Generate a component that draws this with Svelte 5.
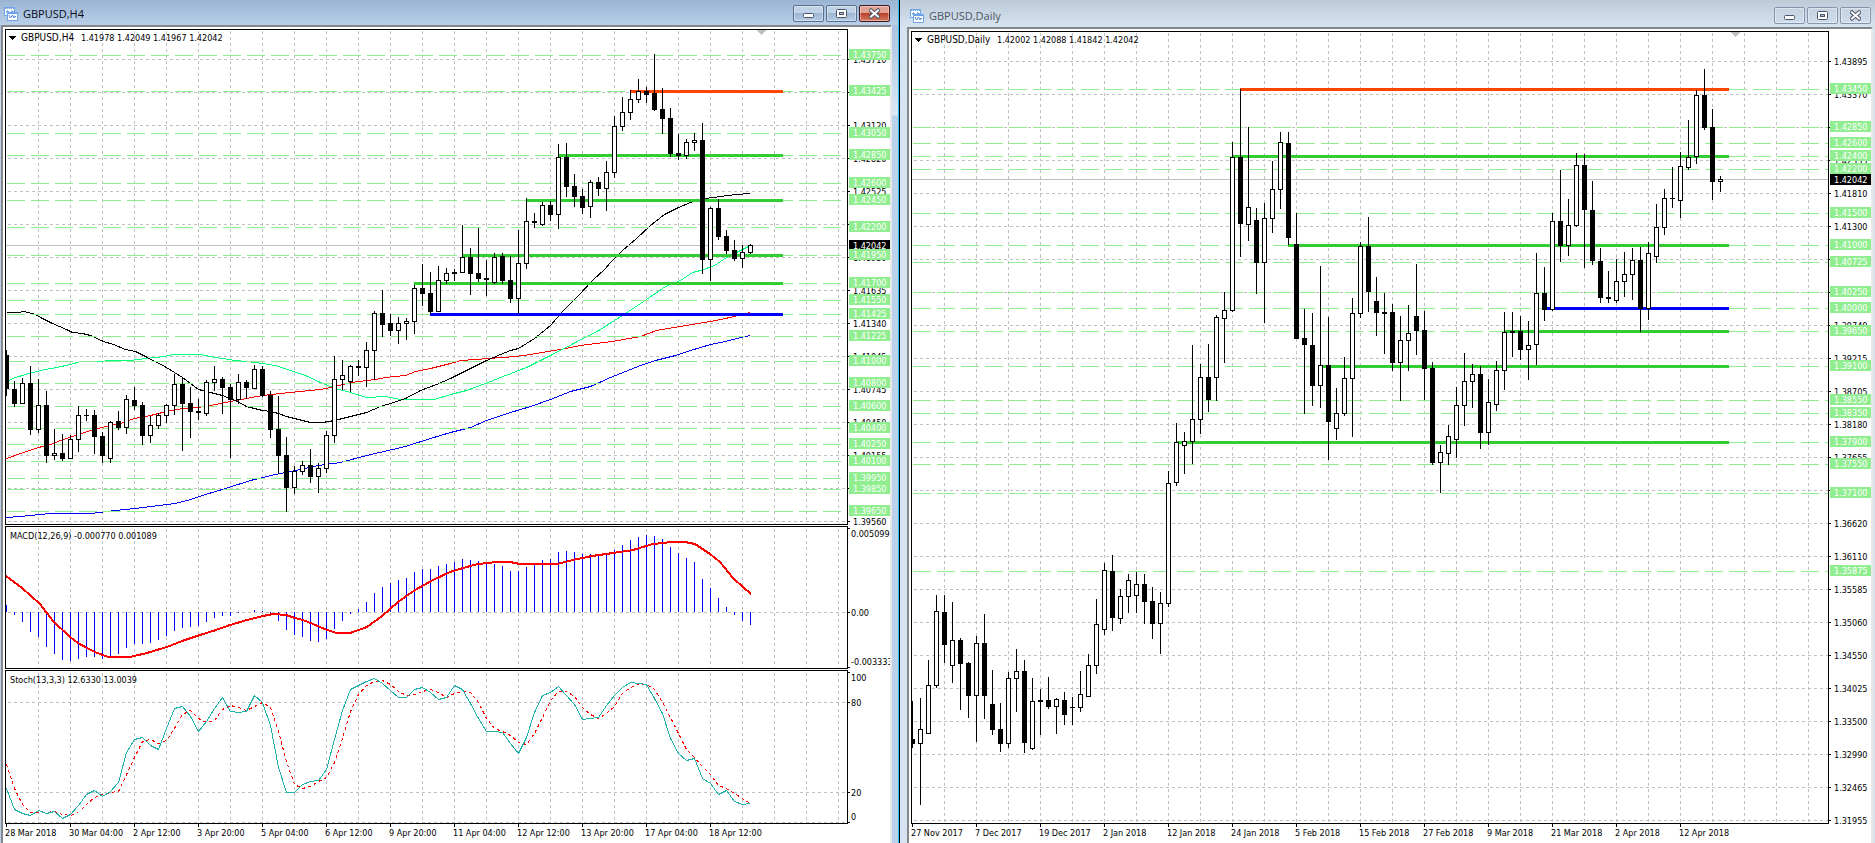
<script lang="ts">
  /**
   * Trading workspace
   *
   * Two tiled chart windows: GBPUSD H4 with MACD and Stochastic, and GBPUSD Daily
   */

  type Candle = number[]; // high, body top, body bottom, low, rising
  type Point = [number, number];
  type Level = [number, string];

  interface Trend {
    x: number;
    y: number;
    color: string;
  }

  interface Chart {
    title: string;
    quotes: string;
    quotesX: number;
    active: boolean;
    left: number;
    top: number;
    width: number;
    height: number;
    right: number; // x of the price axis
    bottom: number; // y of the lower edge of the price plot
    gridX: number;
    grid: { y: number; labels: string[] };
    levels: Level[];
    current: number;
    trends: Trend[];
    trendEnd: number;
    marker: number;
    candles: Candle[];
    dates: string[];
  }

  const STEP = 8;
  const GRID = 32;
  const ROW = 33;
  const BASE = 823;

  const GREEN = '#32cd32';
  const ORANGE = '#ff4500';
  const BLUE = '#0000ff';

  const h4: Chart = {
    title: 'GBPUSD,H4',
    quotes: '1.41978 1.42049 1.41967 1.42042',
    quotesX: 81,
    active: true,
    left: 5,
    top: 29,
    width: 885,
    height: 814,
    right: 847,
    bottom: 524,
    gridX: 38,
    grid: {
      y: 59,
      labels: [
        '1.43710', '1.43415', '1.43120', '1.42820', '1.42525', '1.42230', '1.41930', '1.41635',
        '1.41340', '1.41045', '1.40745', '1.40450', '1.40155', '1.39855', '1.39560',
      ],
    },
    levels: [
      [55, '1.43750'], [91, '1.43425'], [133, '1.43050'], [155, '1.42850'], [183, '1.42600'],
      [200, '1.42450'], [227, '1.42200'], [255, '1.41950'], [283, '1.41700'], [300, '1.41550'],
      [314, '1.41425'], [336, '1.41225'], [361, '1.41000'], [383, '1.40800'], [406, '1.40600'],
      [428, '1.40400'], [444, '1.40250'], [461, '1.40100'], [478, '1.39950'], [489, '1.39850'],
      [511, '1.39650'],
    ],
    current: 245,
    trends: [
      { x: 630, y: 91, color: ORANGE },
      { x: 558, y: 155, color: GREEN },
      { x: 526, y: 200, color: GREEN },
      { x: 462, y: 255, color: GREEN },
      { x: 414, y: 283, color: GREEN },
      { x: 430, y: 314, color: BLUE },
    ],
    trendEnd: 783,
    marker: 761,
    candles: [
      [350, 355, 389, 396, 0], [381, 389, 404, 407, 0], [378, 383, 404, 404, 1], [366, 383, 430, 435, 0],
      [379, 405, 430, 433, 1], [391, 405, 456, 463, 0], [429, 453, 456, 460, 1], [434, 453, 459, 461, 0],
      [435, 439, 459, 459, 1], [406, 415, 440, 452, 1], [409, 415, 416, 421, 0], [410, 415, 437, 454, 0],
      [432, 436, 456, 463, 0], [421, 422, 459, 463, 1], [411, 421, 428, 430, 0], [395, 399, 428, 434, 1],
      [387, 400, 406, 410, 0], [402, 405, 436, 445, 0], [416, 425, 436, 443, 1], [413, 415, 426, 429, 1],
      [404, 405, 416, 423, 1], [374, 384, 406, 415, 1], [377, 384, 404, 451, 0], [387, 403, 412, 438, 0],
      [399, 411, 413, 420, 0], [380, 382, 414, 416, 1], [366, 379, 383, 391, 1], [377, 379, 388, 414, 0],
      [384, 387, 400, 458, 0], [374, 382, 400, 404, 1], [380, 382, 388, 399, 0], [365, 369, 389, 389, 1],
      [366, 369, 396, 397, 0], [391, 395, 430, 438, 0], [396, 429, 456, 474, 0], [437, 455, 488, 512, 0],
      [466, 471, 488, 494, 1], [461, 465, 472, 475, 1], [449, 465, 477, 483, 0], [463, 468, 477, 493, 1],
      [431, 435, 469, 473, 1], [356, 379, 436, 443, 1], [360, 375, 380, 390, 1], [365, 366, 382, 392, 1],
      [360, 366, 368, 376, 0], [342, 350, 368, 387, 1], [311, 313, 351, 380, 1], [290, 313, 325, 337, 0],
      [314, 323, 331, 336, 0], [317, 323, 331, 344, 1], [318, 321, 324, 340, 1], [285, 288, 322, 334, 1],
      [264, 288, 294, 306, 0], [272, 293, 312, 314, 0], [266, 280, 312, 312, 1], [268, 273, 281, 284, 1],
      [269, 272, 274, 281, 0], [225, 257, 273, 273, 1], [248, 257, 274, 295, 0], [228, 273, 279, 282, 0],
      [260, 278, 280, 296, 0], [253, 257, 283, 284, 1], [253, 256, 281, 284, 0], [256, 280, 299, 303, 0],
      [230, 263, 299, 314, 1], [198, 221, 264, 269, 1], [213, 221, 223, 228, 0], [202, 205, 225, 226, 1],
      [201, 205, 215, 221, 0], [144, 157, 215, 229, 1], [143, 157, 187, 197, 0], [174, 186, 197, 207, 0],
      [189, 196, 208, 214, 0], [180, 182, 207, 218, 1], [177, 182, 189, 196, 0], [161, 172, 189, 211, 1],
      [116, 126, 173, 178, 1], [97, 112, 127, 131, 1], [90, 99, 113, 120, 1], [79, 91, 100, 103, 1],
      [87, 91, 95, 103, 0], [54, 93, 110, 111, 0], [88, 109, 119, 134, 0], [108, 118, 154, 157, 0],
      [134, 153, 156, 160, 0], [139, 142, 156, 159, 1], [133, 140, 143, 151, 1], [123, 140, 260, 274, 0],
      [207, 208, 260, 281, 1], [199, 208, 237, 240, 0], [230, 236, 251, 254, 0], [240, 250, 259, 261, 0],
      [245, 252, 259, 268, 1], [244, 245, 253, 254, 1],
    ],
    dates: [
      '28 Mar 2018', '30 Mar 04:00', '2 Apr 12:00', '3 Apr 20:00', '5 Apr 04:00', '6 Apr 12:00',
      '9 Apr 20:00', '11 Apr 04:00', '12 Apr 12:00', '13 Apr 20:00', '17 Apr 04:00', '18 Apr 12:00',
    ],
  };

  const daily: Chart = {
    title: 'GBPUSD,Daily',
    quotes: '1.42002 1.42088 1.41842 1.42042',
    quotesX: 997,
    active: false,
    left: 911,
    top: 31,
    width: 960,
    height: 812,
    right: 1828,
    bottom: 823,
    gridX: 944,
    grid: {
      y: 61,
      labels: [
        '1.43895', '1.43370', '1.42860', '1.42335', '1.41810', '1.41300', '1.40775', '1.40250',
        '1.39740', '1.39215', '1.38705', '1.38180', '1.37655', '1.37130', '1.36620', '1.36110',
        '1.35585', '1.35060', '1.34550', '1.34025', '1.33500', '1.32990', '1.32465', '1.31955',
      ],
    },
    levels: [
      [89, '1.43450'], [127, '1.42850'], [143, '1.42600'], [156, '1.42400'], [169, '1.42200'],
      [213, '1.41500'], [245, '1.41000'], [262, '1.40725'], [292, '1.40250'], [308, '1.40000'],
      [331, '1.39650'], [366, '1.39100'], [400, '1.38550'], [413, '1.38350'], [442, '1.37900'],
      [464, '1.37550'], [493, '1.37100'], [571, '1.35875'],
    ],
    current: 179,
    trends: [
      { x: 1240, y: 89, color: ORANGE },
      { x: 1232, y: 156, color: GREEN },
      { x: 1288, y: 245, color: GREEN },
      { x: 1544, y: 308, color: BLUE },
      { x: 1504, y: 331, color: GREEN },
      { x: 1320, y: 366, color: GREEN },
      { x: 1176, y: 442, color: GREEN },
    ],
    trendEnd: 1729,
    marker: 1735,
    candles: [
      [701, 739, 744, 748, 0], [698, 729, 744, 805, 1], [660, 685, 734, 734, 1], [595, 611, 686, 688, 1],
      [595, 612, 645, 663, 0], [602, 640, 666, 683, 1], [638, 640, 664, 710, 0], [662, 663, 696, 718, 0],
      [636, 643, 696, 742, 1], [614, 643, 696, 719, 0], [670, 704, 730, 735, 0], [703, 729, 744, 752, 0],
      [672, 678, 744, 748, 1], [649, 671, 679, 712, 1], [660, 671, 743, 753, 0], [678, 701, 749, 750, 1],
      [689, 700, 702, 735, 0], [677, 700, 707, 709, 0], [698, 699, 707, 734, 1], [692, 700, 715, 725, 0],
      [697, 707, 708, 725, 0], [671, 694, 708, 712, 1], [654, 665, 697, 697, 1], [599, 624, 666, 674, 1],
      [563, 570, 630, 635, 1], [555, 571, 618, 631, 0], [589, 596, 619, 624, 1], [574, 580, 597, 613, 1],
      [572, 584, 596, 613, 1], [574, 584, 602, 624, 0], [587, 601, 624, 639, 0], [592, 603, 624, 654, 1],
      [471, 483, 604, 607, 1], [423, 442, 483, 486, 1], [432, 441, 446, 474, 1], [345, 419, 442, 464, 1],
      [364, 377, 420, 434, 1], [344, 377, 400, 412, 0], [315, 317, 378, 401, 1], [292, 310, 319, 363, 1],
      [142, 157, 311, 312, 1], [89, 157, 224, 257, 0], [127, 207, 225, 241, 1], [208, 220, 263, 294, 0],
      [203, 218, 263, 323, 1], [161, 189, 219, 233, 1], [132, 142, 190, 209, 1], [132, 143, 238, 245, 0],
      [213, 244, 339, 339, 0], [309, 338, 345, 414, 0], [313, 345, 386, 406, 0], [266, 365, 386, 408, 1],
      [317, 365, 422, 460, 0], [388, 413, 429, 440, 1], [357, 378, 414, 416, 1], [298, 313, 379, 437, 1],
      [242, 246, 314, 318, 1], [217, 246, 292, 312, 0], [277, 301, 313, 336, 0], [293, 312, 314, 354, 0],
      [304, 312, 363, 371, 0], [316, 340, 363, 401, 1], [305, 333, 341, 371, 1], [264, 316, 331, 355, 0],
      [311, 330, 369, 400, 0], [362, 368, 463, 465, 0], [445, 452, 463, 493, 1], [425, 436, 454, 465, 1],
      [387, 405, 440, 458, 1], [353, 381, 406, 426, 1], [364, 374, 382, 408, 1], [366, 374, 433, 449, 0],
      [379, 402, 433, 445, 1], [361, 370, 405, 411, 1], [312, 332, 371, 390, 1], [312, 331, 333, 357, 0],
      [316, 331, 350, 360, 0], [321, 345, 350, 380, 1], [253, 293, 345, 365, 1], [267, 293, 310, 321, 0],
      [213, 221, 310, 311, 1], [170, 221, 246, 262, 0], [199, 225, 246, 256, 1], [153, 165, 226, 227, 1],
      [154, 165, 210, 268, 0], [181, 210, 261, 265, 0], [248, 261, 298, 303, 0], [271, 297, 299, 303, 0],
      [259, 281, 301, 303, 1], [252, 274, 282, 297, 1], [248, 260, 275, 300, 1], [247, 260, 309, 332, 0],
      [242, 253, 309, 320, 1], [204, 227, 257, 263, 1], [189, 198, 228, 235, 1], [167, 198, 199, 208, 0],
      [152, 166, 201, 218, 1], [120, 157, 168, 170, 1], [90, 95, 157, 164, 1], [69, 95, 128, 130, 0],
      [109, 127, 182, 200, 0], [176, 179, 182, 192, 1],
    ],
    dates: [
      '27 Nov 2017', '7 Dec 2017', '19 Dec 2017', '2 Jan 2018', '12 Jan 2018', '24 Jan 2018',
      '5 Feb 2018', '15 Feb 2018', '27 Feb 2018', '9 Mar 2018', '21 Mar 2018', '2 Apr 2018',
      '12 Apr 2018',
    ],
  };

  /** Moving averages on the H4 chart */
  const averages: { color: string; points: Point[] }[] = [
    {
      color: '#0000ff',
      points: [
        [6, 517], [20, 516], [50, 513], [90, 513], [115, 510], [135, 508], [150, 506], [175, 503],
        [190, 499], [205, 494], [225, 488], [250, 480], [275, 474], [295, 470], [318, 465], [340, 462],
        [366, 455], [405, 446], [430, 438], [450, 432], [470, 427], [486, 420], [510, 412], [530, 406],
        [550, 399], [570, 391], [590, 386], [610, 377], [640, 365], [655, 360], [675, 355], [690, 350],
        [710, 344], [725, 341], [740, 337], [750, 335],
      ],
    },
    {
      color: '#ff0000',
      points: [
        [6, 458], [20, 453], [38, 447], [50, 444], [60, 440], [75, 435], [90, 430], [105, 426],
        [120, 423], [134, 418], [150, 415], [166, 411], [182, 408], [198, 407], [210, 405], [230, 401],
        [246, 398], [262, 395], [280, 393], [300, 391], [320, 389], [335, 386], [350, 382], [375, 379],
        [385, 377], [405, 375], [415, 371], [430, 368], [450, 363], [460, 360], [475, 359], [515, 356],
        [530, 354], [560, 349], [580, 345], [612, 341], [640, 336], [656, 330], [680, 326], [710, 321],
        [725, 318], [750, 312],
      ],
    },
    {
      color: '#00ff7f',
      points: [
        [6, 381], [15, 377], [25, 374], [40, 370], [56, 367], [70, 364], [80, 361], [130, 360],
        [145, 358], [165, 356], [172, 354], [200, 354], [215, 357], [235, 360], [255, 362], [275, 365],
        [290, 370], [305, 375], [320, 382], [335, 388], [350, 392], [366, 397], [385, 396], [400, 399],
        [434, 399], [450, 394], [466, 390], [485, 383], [500, 377], [526, 367], [550, 355], [575, 342],
        [600, 329], [625, 313], [646, 299], [665, 286], [680, 280], [692, 272], [700, 270], [714, 265],
        [726, 257], [738, 251], [750, 245],
      ],
    },
    {
      color: '#000000',
      points: [
        [6, 312], [18, 312], [23, 311], [28, 312], [35, 314], [40, 317], [52, 323], [66, 329],
        [72, 332], [82, 333], [90, 335], [103, 341], [113, 344], [125, 349], [135, 351], [145, 356],
        [166, 367], [182, 377], [198, 389], [210, 392], [222, 395], [235, 400], [246, 406], [262, 410],
        [270, 411], [278, 413], [286, 416], [302, 420], [310, 422], [322, 422], [334, 420], [350, 416],
        [366, 412], [380, 406], [393, 402], [405, 398], [420, 390], [436, 384], [450, 378], [466, 370],
        [486, 360], [500, 354], [510, 350], [518, 348], [534, 338], [550, 325], [562, 311], [578, 295],
        [592, 280], [604, 269], [610, 262], [622, 250], [636, 238], [650, 225], [664, 214], [678, 207],
        [690, 202], [705, 198], [720, 196], [735, 194], [750, 193],
      ],
    },
  ];

  const MACD_ZERO = 612;

  const macd = [
    605, 615, 622, 632, 637, 647, 654, 660, 661, 659, 657, 657, 659, 656, 654, 648, 644, 644, 643, 640,
    636, 631, 628, 627, 626, 622, 618, 616, 616, 613, 612, 610, 611, 614, 621, 630, 635, 637, 641, 642,
    639, 629, 621, 614, 609, 602, 593, 587, 583, 580, 578, 572, 569, 569, 566, 564, 562, 559, 560, 561,
    563, 564, 566, 571, 571, 567, 564, 560, 559, 552, 551, 552, 554, 554, 555, 553, 550, 545, 540, 537,
    535, 536, 539, 547, 553, 558, 562, 579, 588, 598, 607, 615, 621, 625,
  ];

  const signal: Point[] = [
    [6, 576], [22, 588], [40, 604], [53, 621], [70, 637], [78, 643], [87, 648], [95, 652], [108, 657],
    [130, 657], [147, 653], [167, 647], [182, 641], [200, 635], [213, 631], [230, 625], [247, 620],
    [263, 616], [273, 614], [286, 615], [295, 618], [303, 620], [313, 624], [327, 630], [337, 633],
    [350, 633], [367, 627], [382, 616], [398, 602], [415, 590], [433, 580], [450, 572], [463, 568],
    [478, 564], [497, 562], [510, 562], [520, 564], [557, 564], [573, 560], [592, 556], [613, 553],
    [633, 550], [653, 544], [672, 542], [685, 542], [695, 544], [710, 554], [720, 562], [733, 578],
    [743, 587], [751, 594],
  ];

  const stochMain = [
    788, 809, 813, 815, 810, 813, 811, 818, 814, 805, 794, 790, 796, 791, 782, 752, 739, 737, 745, 749,
    728, 708, 706, 716, 731, 721, 708, 697, 711, 712, 711, 695, 702, 725, 767, 792, 792, 784, 781, 780,
    769, 739, 710, 689, 685, 681, 678, 683, 690, 697, 697, 689, 687, 692, 699, 697, 685, 689, 703, 718,
    731, 731, 732, 743, 753, 737, 712, 695, 692, 686, 695, 704, 719, 718, 717, 705, 695, 687, 682, 683,
    684, 698, 713, 738, 753, 760, 758, 778, 783, 794, 790, 801, 804, 803,
  ];

  const stochSignal = [
    764, 788, 804, 812, 812, 812, 811, 814, 815, 812, 804, 797, 794, 792, 791, 774, 757, 741, 739, 743,
    740, 728, 714, 710, 718, 722, 720, 709, 705, 707, 710, 706, 702, 707, 731, 761, 784, 788, 786, 781,
    777, 762, 738, 711, 694, 685, 681, 680, 684, 691, 695, 694, 691, 689, 692, 697, 693, 691, 692, 702,
    718, 728, 731, 735, 742, 744, 733, 717, 700, 691, 691, 696, 707, 714, 718, 713, 706, 693, 687, 684,
    684, 689, 702, 717, 733, 749, 757, 766, 774, 785, 788, 793, 798, 803,
  ];

  function barX(chart: Chart, i: number): number {
    return chart.left + 1 + i * STEP;
  }

  function gridColumns(chart: Chart): number[] {
    const columns: number[] = [];
    for (let x = chart.gridX; x < chart.right; x += GRID) columns.push(x);
    return columns;
  }

  function series(values: number[]): string {
    return values.map((y, i) => `${barX(h4, i)},${y}`).join(' ');
  }
</script>

{#snippet windowIcon()}
  <svg class="window__icon" viewBox="0 0 14 14" aria-hidden="true">
    <rect x="0" y="0" width="11" height="9" rx="1" fill="#6ea3e8" />
    <rect x="1" y="2" width="9" height="6" fill="#fff" />
    <path d="M2 1.5h8" stroke="#d5e6fb" stroke-dasharray="1 1" />
    <path d="M2 5h1V4h1v1h1M7 4h1v1h1V4" fill="none" stroke="#4a86dd" />
    <rect x="3" y="5" width="11" height="9" rx="1" fill="#6ea3e8" />
    <rect x="4" y="7" width="9" height="6" fill="#fff" />
    <path d="M5 8l1.5 3 2-3 1.500 3 1-2 1 1" fill="none" stroke="#4a86dd" />
  </svg>
{/snippet}

{#snippet titleBar(chart: Chart)}
  <header class="title">
    {@render windowIcon()}
    <h1 class="title__text">{chart.title}</h1>
    <button class="title__button" aria-label="Minimize">
      <svg viewBox="0 0 11 11" aria-hidden="true">
        <rect x="0.5" y="5.5" width="10" height="4" rx="1" fill="#fff" stroke="#4b5468" />
      </svg>
    </button>
    <button class="title__button" aria-label="Restore">
      <svg viewBox="0 0 11 11" aria-hidden="true">
        <rect x="0.5" y="1.5" width="10" height="8" rx="1" fill="#fff" stroke="#4b5468" />
        <rect x="3.5" y="4.5" width="4" height="2" fill="#a9bdd6" stroke="#4b5468" />
      </svg>
    </button>
    <button class="title__button title__button--close" aria-label="Close">
      <svg viewBox="0 0 11 11" aria-hidden="true">
        <path d="M2 2.5l7 6M9 2.5l-7 6" stroke="#4b5468" stroke-width="4" stroke-linecap="square" />
        <path d="M2 2.5l7 6M9 2.5l-7 6" stroke="#fff" stroke-width="2" stroke-linecap="square" />
      </svg>
    </button>
  </header>
{/snippet}

{#snippet pricePlot(chart: Chart)}
  {@const right = chart.right}
  <!-- Grid -->
  <g class="grid" transform="translate(0.5 0.5)">
    {#each gridColumns(chart) as x}
      <line x1={x} y1={chart.top + 1} x2={x} y2={BASE} />
    {/each}
    {#each chart.grid.labels as _, i}
      <line x1={chart.left + 2} y1={chart.grid.y + i * ROW} x2={right} y2={chart.grid.y + i * ROW} />
    {/each}
  </g>

  {#if chart.active}
    {#each averages as average}
      <polyline
        class="curve"
        transform="translate(0.5 0.5)"
        points={average.points.join(' ')}
        stroke={average.color}
      />
    {/each}
  {/if}

  <g class="levels" transform="translate(0.5 0.5)">
    {#each chart.levels as [y]}
      <line x1={chart.left + 1} y1={y} x2={right} y2={y} />
    {/each}
  </g>
  <rect x={chart.left} y={chart.current} width={right - chart.left} height="1" fill="#c0c0c0" />

  {#each chart.trends as trend}
    <rect x={trend.x} y={trend.y - 1} width={chart.trendEnd - trend.x} height="3" fill={trend.color} />
  {/each}

  <path d="M{chart.marker - 4} {chart.top + 1}h9l-4.5 5z" fill="#c0c0c0" />

  <!-- Candles -->
  {#each chart.candles as [high, top, bottom, low, rising], i}
    {@const x = barX(chart, i)}
    <rect {x} y={high} width="1" height={low - high} />
    <rect x={x - 2} y={top} width="5" height={bottom - top} />
    {#if rising}
      <rect x={x - 1} y={top + 1} width="3" height={bottom - top - 2} fill="#fff" />
    {/if}
  {/each}
{/snippet}

{#snippet priceAxis(chart: Chart)}
  {@const right = chart.right}
  {#each chart.grid.labels as label, i}
    {@const y = chart.grid.y + i * ROW}
    <rect x={right} {y} width="3" height="1" />
    <text x={right + 6} y={y + 4}>{label}</text>
  {/each}
  <rect x={right + 2} y={chart.current - 5} width="41" height="11" />
  <text class="inverse" x={right + 6} y={chart.current + 4}>1.42042</text>
  {#each chart.levels as [y, label]}
    <rect x={right + 2} y={y - 6} width="41" height="11" fill="#90ee90" />
    <text class="inverse" x={right + 6} y={y + 3}>{label}</text>
  {/each}
{/snippet}

{#snippet timeAxis(chart: Chart)}
  {#each chart.dates as date, i}
    <rect x={barX(chart, i * 8)} y={BASE} width="1" height="4" />
    <text x={barX(chart, i * 8) - 1} y="836">{date}</text>
  {/each}
{/snippet}

{#snippet heading(chart: Chart)}
  <path d="M{chart.left + 4} {chart.top + 7}h7l-3.5 4z" />
  <text class="symbol" x={chart.left + 16} y={chart.top + 12}>{chart.title}</text>
  <text x={chart.quotesX} y={chart.top + 12}>{chart.quotes}</text>
{/snippet}

{#snippet frame(chart: Chart, top: number, bottom: number)}
  <rect
    class="frame"
    transform="translate(0.5 0.5)"
    x={chart.left}
    y={top}
    width={chart.right - chart.left}
    height={bottom - top}
  />
{/snippet}

<main class="workspace">
  {#each [h4, daily] as chart}
    <section class="window" class:window--active={chart.active} aria-label={chart.title}>
      {@render titleBar(chart)}
      <div class="window__body">
        <svg
          class="chart"
          viewBox="{chart.left} {chart.top} {chart.width} {chart.height}"
          role="img"
          aria-label="{chart.title} price chart"
        >
          <clipPath id="plot-{chart.left}">
            <rect x={chart.left} y={chart.top} width={chart.right - chart.left} height={BASE - chart.top} />
          </clipPath>
          <g clip-path="url(#plot-{chart.left})">
            {@render pricePlot(chart)}

            {#if chart.active}
              <!-- MACD -->
              <line class="guide" transform="translate(0.5 0.5)" x1="7" y1={MACD_ZERO} x2="847" y2={MACD_ZERO} />
              {#each macd as y, i}
                <rect
                  x={barX(chart, i)}
                  y={Math.min(y, MACD_ZERO)}
                  width="1"
                  height={Math.abs(y - MACD_ZERO)}
                  fill="#0000ff"
                />
              {/each}
              <polyline class="curve curve--thick" points={signal.join(' ')} stroke="#ff0000" />

              <!-- Stochastic -->
              {#each [702, 792, 822] as y}
                <line class="guide" transform="translate(0.5 0.5)" x1="7" y1={y} x2="847" y2={y} />
              {/each}
              <polyline
                class="curve curve--dashed"
                transform="translate(0.5 0.5)"
                points={series(stochSignal)}
                stroke="#ff0000"
              />
              <polyline
                class="curve"
                transform="translate(0.5 0.5)"
                points={series(stochMain)}
                stroke="#20b2aa"
              />
            {/if}
          </g>

          {@render frame(chart, chart.top, chart.bottom)}
          {@render heading(chart)}
          {@render priceAxis(chart)}

          {#if chart.active}
            <rect x="5" y="525" width="843" height="1" fill="#fff" />
            <rect x="5" y="669" width="843" height="1" fill="#fff" />
            {@render frame(chart, 526, 668)}
            {@render frame(chart, 670, BASE)}
            <text x="10" y="539">MACD(12,26,9) -0.000770 0.001089</text>
            <text x="10" y="683">Stoch(13,3,3) 12.6330 13.0039</text>
            {#each [528, 612, 667, 672, 702, 792, 822] as y}
              <rect x="847" {y} width="3" height="1" />
            {/each}
            <text x="851" y="537">0.005099</text>
            <text x="851" y="616">0.00</text>
            <text x="851" y="665">-0.003333</text>
            <text x="851" y="681">100</text>
            <text x="851" y="706">80</text>
            <text x="851" y="796">20</text>
            <text x="851" y="820">0</text>
          {/if}

          {@render timeAxis(chart)}
        </svg>
      </div>
    </section>
  {/each}
</main>

<style>
  :global(body) {
    margin: 0;
    background: #000;
  }

  .workspace {
    display: grid;
    grid-template-columns: 899fr 975fr;
    gap: 1px;
    background: #000;
  }

  .window {
    display: flex;
    flex-direction: column;
    padding: 0 2px 0 7px;
    background: #d6e3f1;
  }

  .window--active {
    padding: 0 6px 0 1px;
    border-right: 1px solid #2fc4ee;
    background: linear-gradient(#a6c1e0 20px, #dbe7f5 115px, #b9d1ea 116px);
  }

  .window__icon {
    width: 14px;
    height: 14px;
    flex-shrink: 0;
  }

  .window__body {
    padding: 2px 0 0 2px;
    border: solid;
    border-width: 2px 2px 0;
    border-color: #84868a #e8e8e8 #e8e8e8 #84868a;
    background: #fff;
  }

  /* Title bar */
  .title {
    display: flex;
    align-items: center;
    gap: 2px;
    height: 23px;
    margin: 0 -2px 0 -7px;
    padding: 4px 4px 0 10px;
    background: linear-gradient(#bdcbd9, #d6e4f2);
  }

  .window--active .title {
    margin: 0 -6px 0 -1px;
    padding: 2px 8px 0 4px;
    background: linear-gradient(#99b4d3, #b9d0ea);
  }

  .title__text {
    flex: 1;
    margin: 0 0 0 3px;
    font: 400 11px/17px "Open Sans", "Noto Sans", sans-serif;
    color: #50565e;
  }

  .window--active .title__text {
    color: #0a0a14;
  }

  .title__button {
    display: flex;
    align-items: center;
    justify-content: center;
    width: 31px;
    height: 17px;
    padding: 0;
    border: 1px solid #8595ad;
    border-radius: 2px;
    background: linear-gradient(#c5d2e0, #cfdceb);
    box-shadow: inset 0 0 0 1px rgba(255, 255, 255, 0.4);
  }

  .title__button svg {
    width: 11px;
    height: 11px;
  }

  .window--active .title__button {
    border-color: #5a6e8e;
    background: linear-gradient(#c0d2e7 0 50%, #9db6d2 50%, #b5cde6);
  }

  .window--active .title__button--close {
    border-color: #43141c;
    background: linear-gradient(#e0a093 0 50%, #b8402a 50%, #d47c62);
  }

  /* Chart */
  .chart {
    display: block;
    width: 100%;
    height: auto;
    shape-rendering: crispEdges;
    font-family: "DejaVu Sans Condensed", "DejaVu Sans", sans-serif;
    font-size: 9px;
  }

  .chart .symbol {
    font-size: 10px;
  }

  .chart .inverse {
    fill: #fff;
  }

  .grid line,
  .guide {
    stroke: #c0c0c0;
    stroke-dasharray: 3 3;
  }

  .levels line {
    stroke: #90ee90;
    stroke-dasharray: 18 6;
  }

  .curve {
    fill: none;
  }

  .curve--thick {
    stroke-width: 2px;
  }

  .curve--dashed {
    stroke-dasharray: 3 3;
  }

  .frame {
    fill: none;
    stroke: #000;
  }
</style>
